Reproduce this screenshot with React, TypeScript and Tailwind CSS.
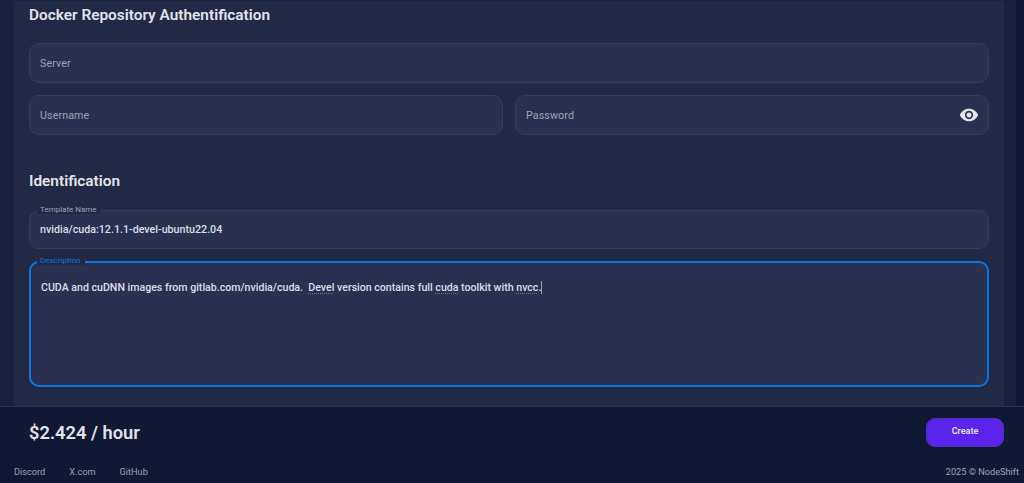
import React from 'react';

function EyeIcon() {
  return (
    <svg width="20" height="20" viewBox="0 0 24 24" fill="#e6e7ee">
      <path d="M12 4.5C7 4.5 2.73 7.61 1 12c1.73 4.39 6 7.5 11 7.5s9.27-3.11 11-7.5c-1.73-4.39-6-7.5-11-7.5M12 17c-2.76 0-5-2.24-5-5s2.24-5 5-5 5 2.24 5 5-2.24 5-5 5m0-8c-1.66 0-3 1.34-3 3s1.34 3 3 3 3-1.34 3-3-1.34-3-3-3" />
    </svg>
  );
}

function Field({ placeholder, children }: { placeholder: string; children?: React.ReactNode }) {
  return (
    <div className="flex h-[39.5px] flex-1 items-center justify-between rounded-[10px] border border-[#363d5b] bg-[#2a3150] pl-[10px] pr-[9px]">
      <span className="pt-[2px] text-[10.7px] tracking-[0.1px] text-[#9da1b5]">{placeholder}</span>
      {children}
    </div>
  );
}

function Misspelled({ children }: { children: React.ReactNode }) {
  return <span className="underline decoration-[#6f7490] decoration-dotted decoration-1 underline-offset-2">{children}</span>;
}

export default function App() {
  return (
    <div className="flex h-[483px] w-[1024px] flex-col overflow-hidden bg-[#111833] font-['Roboto',sans-serif]">
      {/* Scrolling content */}
      <div className="flex h-[407px] border-b border-[#2a3256]">
        <div className="w-[14px] bg-[#1a2140]" />
        <div className="flex-1 border-t border-[#1a2140] bg-[#222944] px-[15px]">
          <h2 className="mt-[4px] text-[15.4px] leading-[20px] font-semibold text-[#e2e3ea]">Docker Repository Authentification</h2>

          <div className="mt-[18px] flex flex-col gap-[12.5px]">
            <div className="flex">
              <Field placeholder="Server" />
            </div>
            <div className="flex gap-3">
              <Field placeholder="Username" />
              <Field placeholder="Password">
                <EyeIcon />
              </Field>
            </div>
          </div>

          <h2 className="mt-[36px] text-[15.4px] leading-[20px] font-semibold text-[#e2e3ea]">Identification</h2>

          {/* Template name */}
          <div className="relative mt-[19px] flex h-[39.5px] items-center rounded-[10px] border border-[#363d5b] bg-[#2a3150] px-[10px]">
            <span className="absolute -top-[6px] left-[7px] bg-[#222944] px-[3px] text-[8px] leading-[9px] text-[#9da1b5]">Template Name</span>
            <span className="pt-[2px] text-[10.7px] font-medium text-[#dcdee6]">nvidia/cuda:12.1.1-devel-ubuntu22.04</span>
          </div>

          {/* Description */}
          <div className="relative mt-[12px] h-[126px] rounded-[10px] border-2 border-[#0a78e0] bg-[#2a3150] px-[10px] pt-[17px]">
            <span className="absolute -top-[7px] left-[6px] bg-[#222944] pr-[4px] pl-[3px] text-[8px] leading-[9px] text-[#0a78e0]">Description</span>
            <p className="text-[10.6px] leading-[16px] font-medium whitespace-pre text-[#dcdee6]">
              CUDA and cuDNN images from gitlab.com/nvidia/cuda.{'  '}
              <Misspelled>Devel</Misspelled> version contains full <Misspelled>cuda</Misspelled> toolkit with <Misspelled>nvcc</Misspelled>.
              <span className="inline-block h-[13px] w-px bg-[#9da1b5] align-[-3px]" />
            </p>
          </div>
        </div>
        <div className="w-[12px] bg-[#1a2140]" />
        <div className="w-2 bg-[#111833]" />
      </div>

      {/* Price and action */}
      <div className="flex h-[52px] items-center justify-between pr-5 pl-[29px]">
        <span className="text-[18.3px] font-semibold text-[#e2e3ea]">$2.424 / hour</span>
        <button className="mb-[2px] h-[29px] w-[78px] rounded-[9px] border border-[#4a34b0] bg-[#5a24ec] text-[9px] font-semibold text-[#e2e3ea]">Create</button>
      </div>

      {/* Footer */}
      <div className="flex flex-1 items-start justify-between pt-[6px] pr-[5px] pl-[14px] text-[9.2px] leading-[14px] text-[#9da1b5]">
        <div className="flex gap-[24px]">
          <span>Discord</span>
          <span>X.com</span>
          <span>GitHub</span>
        </div>
        <span>2025 © NodeShift</span>
      </div>
    </div>
  );
}
